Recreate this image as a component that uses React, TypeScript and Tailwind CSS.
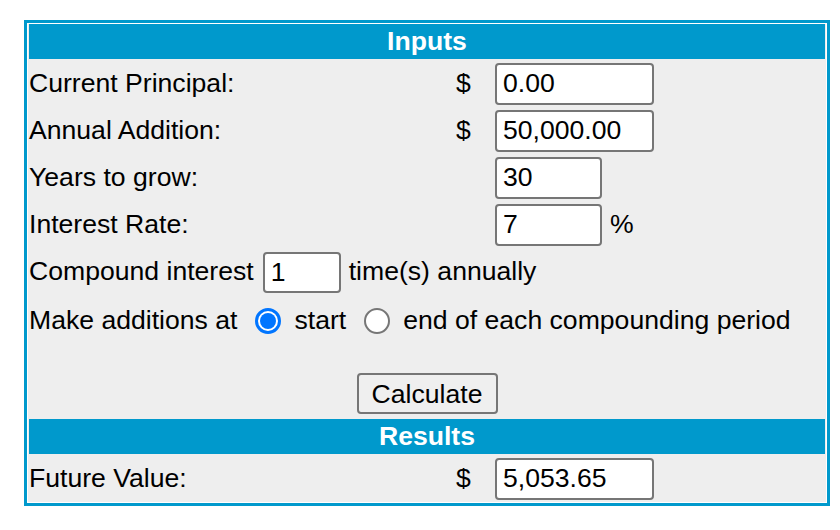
import React from "react";

function Field({ value, w, h = "h-[42px]" }: { value: string; w: string; h?: string }) {
  return (
    <input
      readOnly
      value={value}
      className={`${w} ${h} bg-white border-2 border-[#767676] rounded-[4px] pl-[6px] text-black outline-none`}
    />
  );
}

function Row({ label, dollar, children }: { label: string; dollar?: boolean; children: React.ReactNode }) {
  return (
    <div className="flex items-center h-[45px]">
      <div className="w-[427px]">{label}</div>
      <div className="w-[15px] text-center">{dollar ? "$" : ""}</div>
      <div className="ml-[24px] flex items-center">{children}</div>
    </div>
  );
}

function Header({ title }: { title: string }) {
  return (
    <div className="h-[35px] bg-[#0099cc] text-white font-bold flex items-center justify-center">
      {title}
    </div>
  );
}

export default function App() {
  return (
    <div
      className="min-h-screen bg-white pt-[20px] pl-[24px] text-black text-[26.6px] leading-normal"
      style={{ fontFamily: '"Liberation Sans", Arial, Helvetica, sans-serif' }}
    >
      <div className="w-[806px] border-[3px] border-[#0099cc]">
        <div className="border border-white bg-[#eeeeee] px-px pb-px flex flex-col gap-[2px]">
          <Header title="Inputs" />
          <Row label="Current Principal:" dollar>
            <Field value="0.00" w="w-[159px]" />
          </Row>
          <Row label="Annual Addition:" dollar>
            <Field value="50,000.00" w="w-[159px]" />
          </Row>
          <Row label="Years to grow:">
            <Field value="30" w="w-[107px]" />
          </Row>
          <Row label="Interest Rate:">
            <Field value="7" w="w-[107px]" />
            <span className="ml-[8px]">%</span>
          </Row>
          <div className="flex items-center h-[46px]">
            <span>Compound interest</span>
            <div className="ml-[9px] flex">
              <Field value="1" w="w-[78px]" h="h-[41px]" />
            </div>
            <span className="ml-[8px]">time(s) annually</span>
          </div>
          <div className="flex items-center h-[47px]">
            <span>Make additions at</span>
            <span className="ml-[18px] w-[26px] h-[26px] rounded-full border-[3px] border-[#0075ff] bg-white flex items-center justify-center">
              <span className="w-[16px] h-[16px] rounded-full bg-[#0075ff]" />
            </span>
            <span className="ml-[13px]">start</span>
            <span className="ml-[18px] w-[26px] h-[26px] rounded-full border-2 border-[#767676] bg-white" />
            <span className="ml-[13px]">end of each compounding period</span>
          </div>
          <div className="h-[71px] pt-[27px] flex justify-center items-start">
            <button className="w-[141px] h-[41px] border-2 border-[#767676] rounded-[4px] bg-[#efefef] text-black">
              Calculate
            </button>
          </div>
          <Header title="Results" />
          <Row label="Future Value:" dollar>
            <Field value="5,053.65" w="w-[159px]" />
          </Row>
        </div>
      </div>
    </div>
  );
}
